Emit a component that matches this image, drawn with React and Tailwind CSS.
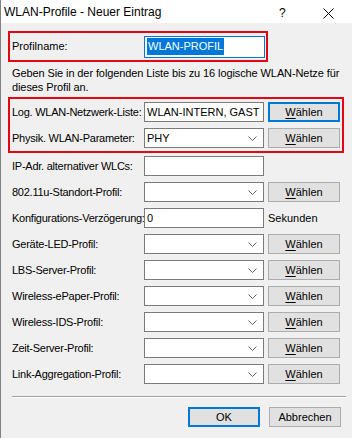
import React from "react";

const font = { fontFamily: '"Liberation Sans", Arial, sans-serif' };

const Chevron = () => (
    <svg width="9" height="6" viewBox="0 0 9 6" className="absolute right-[6px] top-[7px]">
        <polyline points="0.5,0.5 4.5,4.5 8.5,0.5" fill="none" stroke="#606060" strokeWidth="1" />
    </svg>
)

const Field = ({ value, combo }) => (
    <div className="relative w-[120px] h-[20px] bg-white border border-[#7a7a7a] flex items-center pl-[2px] text-[11px] text-black">
        {value}
        {combo && <Chevron />}
    </div>
)

const Button = ({ children, focused, className }) => (
    <div className={"w-[72px] h-[20px] flex items-center justify-center text-[11px] text-black bg-[#e1e1e1] " +
        (focused ? "border-2 border-[#0078d7]" : "border border-[#adadad]") + " " + (className || "")}>
        {children}
    </div>
)

const Waehlen = ({ focused }) => (
    <Button focused={focused} className="ml-[4px]">
        <span><span className="underline underline-offset-2">W</span>ählen</span>
    </Button>
)

const Row = ({ label, value, combo, button, focused, suffix }) => (
    <div className="flex h-[26px] items-center">
        <div className="w-[132px] text-[11px] tracking-[-0.25px] text-black whitespace-nowrap">{label}</div>
        <Field value={value} combo={combo} />
        {button && <Waehlen focused={focused} />}
        {suffix && <div className="ml-[4px] text-[11px] text-black">{suffix}</div>}
    </div>
)

const rows = [
    { label: "IP-Adr. alternativer WLCs:" },
    { label: "802.11u-Standort-Profil:", combo: true, button: true },
    { label: "Konfigurations-Verzögerung:", value: "0", suffix: "Sekunden" },
    { label: "Geräte-LED-Profil:", combo: true, button: true },
    { label: "LBS-Server-Profil:", combo: true, button: true },
    { label: "Wireless-ePaper-Profil:", combo: true, button: true },
    { label: "Wireless-IDS-Profil:", combo: true, button: true },
    { label: "Zeit-Server-Profil:", combo: true, button: true },
    { label: "Link-Aggregation-Profil:", combo: true, button: true },
]

const App = () => {
    return (
        <div className="w-[352px] h-[438px] bg-[#f0f0f0] border-l border-[#808080] overflow-hidden" style={font}>
            {/* title bar */}
            <div className="h-[23px] bg-white flex items-center pl-[3px] relative">
                <span className="text-[12px] text-black">WLAN-Profile - Neuer Eintrag</span>
                <span className="absolute left-[278px] top-[4px] text-[12px] text-black">?</span>
                <svg width="11" height="11" viewBox="0 0 11 11" className="absolute left-[322px] top-[8px]">
                    <line x1="0.5" y1="0.5" x2="10.5" y2="10.5" stroke="#000" strokeWidth="1" />
                    <line x1="10.5" y1="0.5" x2="0.5" y2="10.5" stroke="#000" strokeWidth="1" />
                </svg>
            </div>

            <div className="pl-[7px]">
                {/* Profilname */}
                <div className="mt-[8px] w-[260px] h-[31px] border-2 border-[#e30613] flex items-center pl-[2px]">
                    <div className="w-[132px] text-[11px] text-black">Profilname:</div>
                    <div className="w-[121px] h-[22px] bg-white border border-[#0078d7] flex items-center pl-[2px]">
                        <span className="bg-[#0078d7] text-white text-[11px] leading-[17px] px-px">WLAN-PROFIL</span>
                    </div>
                </div>

                <p className="mt-[4px] pl-[4px] pr-0 text-[11px] tracking-[-0.1px] leading-[14px] text-black">
                    Geben Sie in der folgenden Liste bis zu 16 logische WLAN-Netze für dieses Profil an.
                </p>

                {/* WLAN list */}
                <div className="mt-[3px] w-[336px] h-[56px] border-2 border-[#e30613] pl-[2px]">
                    <Row label="Log. WLAN-Netzwerk-Liste:" value="WLAN-INTERN, GAST" button focused />
                    <Row label="Physik. WLAN-Parameter:" value="PHY" combo button />
                </div>

                <div className="pl-[4px]">
                    {rows.map((r) => (
                        <Row key={r.label} {...r} />
                    ))}
                </div>

                <div className="mt-[9px] ml-[4px] mr-[6px] border-t border-[#a0a0a0] border-b border-b-white" />

                <div className="mt-[9px] flex justify-end pr-[11px]">
                    <Button focused>OK</Button>
                    <Button className="ml-[9px]">Abbrechen</Button>
                </div>
            </div>
        </div>
    )
}

export default App;
